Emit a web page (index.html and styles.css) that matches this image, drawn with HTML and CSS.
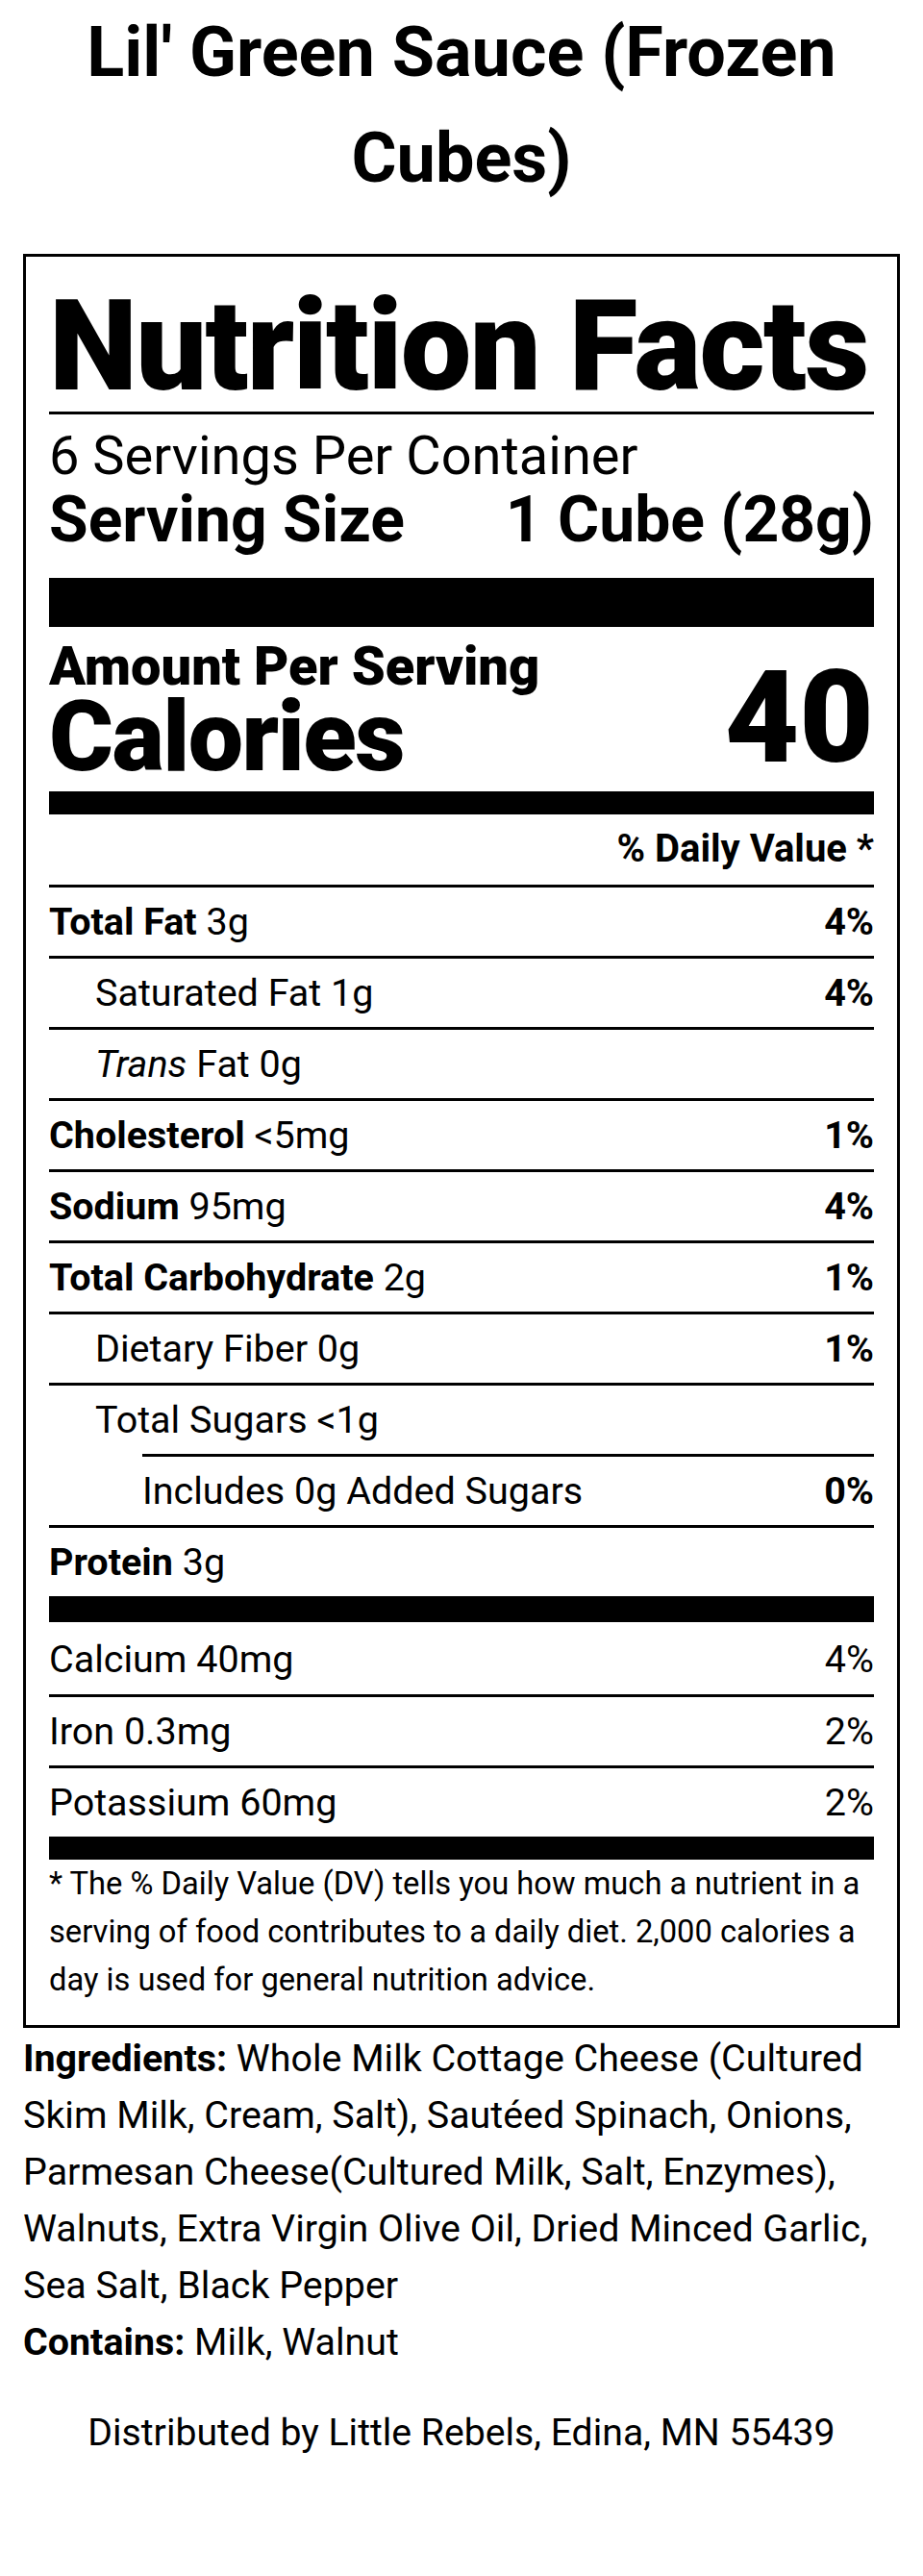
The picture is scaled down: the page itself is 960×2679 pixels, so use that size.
FILE: index.html
```html
<!DOCTYPE html>
<html lang="en">
<head>
<meta charset="utf-8">
<title>Lil' Green Sauce (Frozen Cubes) – Nutrition Facts</title>
<link rel="stylesheet" href="styles.css">
</head>
<body>
<h1 class="title">Lil' Green Sauce (Frozen Cubes)</h1>
<section class="label">
  <div class="label-head">Nutrition Facts</div>
  <div class="servings">6 Servings Per Container</div>
  <div class="serving-size"><span>Serving Size</span><span>1 Cube (28g)</span></div>
  <div class="bar bar-xl"></div>
  <div class="calories">
    <div class="cal-left">
      <div class="amount">Amount Per Serving</div>
      <div class="cal-word">Calories</div>
    </div>
    <div class="cal-num">40</div>
  </div>
  <div class="bar bar-md"></div>
  <div class="row row-dv"><b>% Daily Value *</b></div>
  <div class="row"><span><b>Total Fat</b> 3g</span><b>4%</b></div>
  <div class="row"><span class="indent">Saturated Fat 1g</span><b>4%</b></div>
  <div class="row"><span class="indent"><i>Trans</i> Fat 0g</span></div>
  <div class="row"><span><b>Cholesterol</b> &lt;5mg</span><b>1%</b></div>
  <div class="row"><span><b>Sodium</b> 95mg</span><b>4%</b></div>
  <div class="row"><span><b>Total Carbohydrate</b> 2g</span><b>1%</b></div>
  <div class="row"><span class="indent">Dietary Fiber 0g</span><b>1%</b></div>
  <div class="row"><span class="indent">Total Sugars &lt;1g</span></div>
  <div class="row row-sub2"><span>Includes 0g Added Sugars</span><b>0%</b></div>
  <div class="row"><span><b>Protein</b> 3g</span></div>
  <div class="bar bar-sm"></div>
  <div class="row row-flat"><span>Calcium 40mg</span><span>4%</span></div>
  <div class="row"><span>Iron 0.3mg</span><span>2%</span></div>
  <div class="row"><span>Potassium 60mg</span><span>2%</span></div>
  <div class="bar bar-md"></div>
  <p class="footnote">* The % Daily Value (DV) tells you how much a nutrient in a serving of food contributes to a daily diet. 2,000 calories a day is used for general nutrition advice.</p>
</section>
<p class="ingredients"><b>Ingredients:</b> Whole Milk Cottage Cheese (Cultured Skim Milk, Cream, Salt), Sautéed Spinach, Onions, Parmesan Cheese(Cultured Milk, Salt, Enzymes), Walnuts, Extra Virgin Olive Oil, Dried Minced Garlic, Sea Salt, Black Pepper</p>
<p class="contains"><b>Contains:</b> Milk, Walnut</p>
<p class="distributed">Distributed by Little Rebels, Edina, MN 55439</p>
</body>
</html>
```

FILE: styles.css
```css
html, body {
  background: #fff;
}

body {
  margin: 0;
  padding: 0 24px;
  font-family: Roboto, "Liberation Sans", Arial, sans-serif;
  color: #000;
}

.title {
  margin: 0;
  font-size: 72px;
  font-weight: 700;
  line-height: 110px;
  text-align: center;
}

.label {
  margin-top: 44px;
  border: 3px solid #000;
  padding: 28px 24px 22px;
}

.label-head {
  font-size: 131px;
  font-weight: 900;
  line-height: 131px;
  letter-spacing: -1.7px;
  white-space: nowrap;
  padding-bottom: 2px;
  border-bottom: 3px solid #000;
}

.servings {
  font-size: 56px;
  line-height: 64px;
  padding-top: 11px;
}

.serving-size {
  display: flex;
  justify-content: space-between;
  font-size: 66px;
  font-weight: 700;
  line-height: 69px;
  padding-bottom: 26px;
}

.bar {
  background: #000;
}

.bar-xl {
  height: 51px;
}

.bar-md {
  height: 24px;
}

.bar-sm {
  height: 27px;
}

.calories {
  display: flex;
  justify-content: space-between;
  align-items: flex-end;
  padding: 15px 0 10px;
}

.amount {
  font-size: 56px;
  font-weight: 900;
  line-height: 52px;
}

.cal-word {
  font-size: 102px;
  font-weight: 900;
  line-height: 94px;
  letter-spacing: -1.5px;
}

.cal-num {
  font-size: 134px;
  font-weight: 900;
  line-height: 132px;
}

.row {
  display: flex;
  justify-content: space-between;
  font-size: 39.5px;
  line-height: 48px;
  padding: 12px 0 11px;
  border-top: 3px solid #000;
}

.row b {
  font-weight: 700;
}

.row-dv {
  justify-content: flex-end;
  border-top: 0;
  padding: 12px 0 13px;
  font-size: 40px;
}

.row-flat {
  border-top: 0;
  padding: 15px 0 12px;
}

.row-sub2 {
  margin-left: 97px;
}

.indent {
  padding-left: 48px;
}

.footnote {
  margin: 0;
  font-size: 32.7px;
  line-height: 50px;
}

.ingredients,
.contains {
  margin: 0;
  font-size: 39.4px;
  line-height: 59px;
}

.ingredients {
  margin-top: 2px;
}

.distributed {
  margin: 36px 0 0;
  font-size: 39.2px;
  line-height: 59px;
  text-align: center;
}
```
